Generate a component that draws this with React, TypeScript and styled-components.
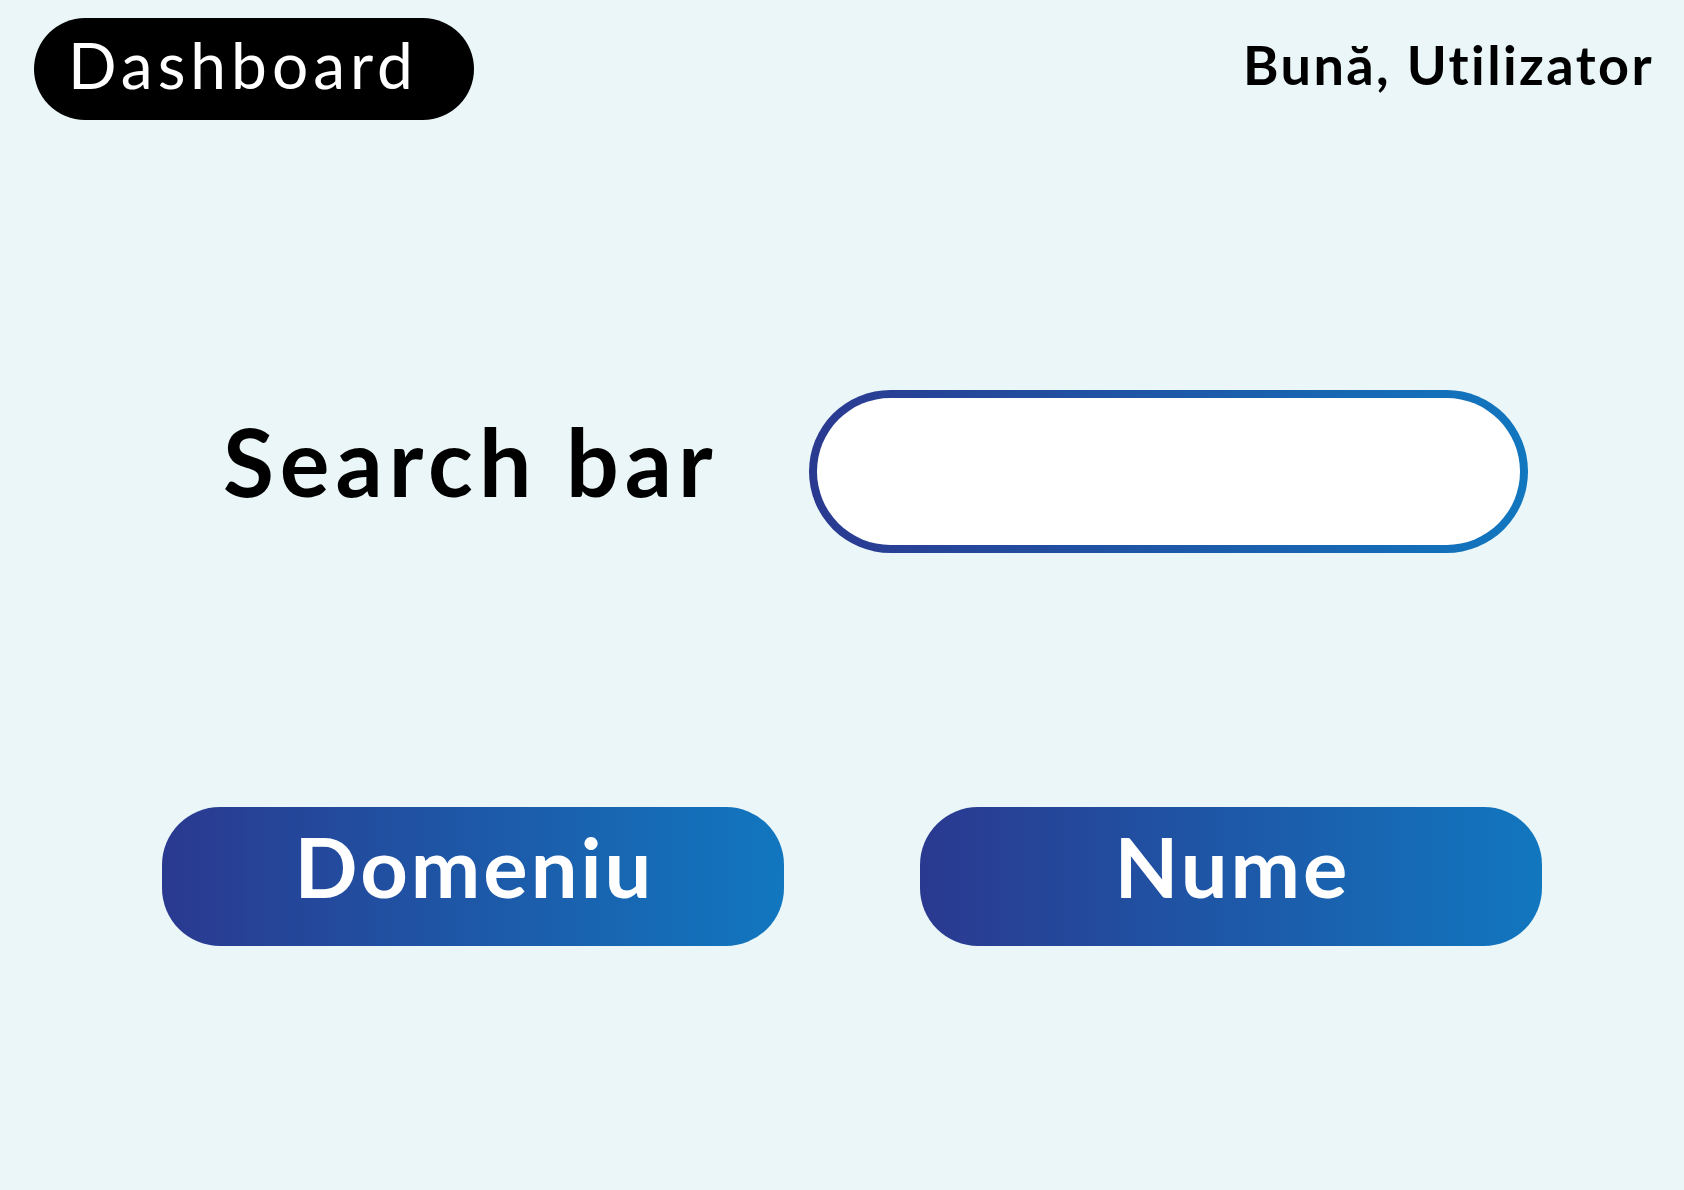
import React from 'react'
import styled, { createGlobalStyle } from 'styled-components'

const GlobalStyle = createGlobalStyle`
  html, body {
    margin: 0;
    padding: 0;
  }
  body {
    background-color: #EAF6F8;
    font-family: Lato, "Noto Sans", "Liberation Sans", sans-serif;
  }
`

const Page = styled.div`
  width: 1684px;
  height: 1190px;
  background-color: #EAF6F8;
  display: flex;
  flex-direction: column;
  box-sizing: border-box;
`

const Header = styled.div`
  display: flex;
  justify-content: space-between;
  align-items: center;
  padding: 18px 30px 0 34px;
`

const Brand = styled.div`
  width: 440px;
  height: 102px;
  box-sizing: border-box;
  padding: 0 0 10px 34px;
  display: flex;
  align-items: center;
  background-color: #000;
  border-radius: 51px;
  color: #fff;
  font-size: 64px;
  font-weight: 400;
  letter-spacing: 5px;
`

const Greeting = styled.div`
  color: #000;
  font-size: 54px;
  font-weight: 700;
  letter-spacing: 2.4px;
  margin-top: -10px;
`

const SearchRow = styled.div`
  display: flex;
  align-items: center;
  padding-left: 223px;
  margin-top: 270px;
  gap: 92px;
`

const SearchLabel = styled.label`
  color: #000;
  font-size: 93px;
  font-weight: 700;
  letter-spacing: 6px;
  white-space: nowrap;
  width: 494px;
  padding-bottom: 22px;
`

const SearchInput = styled.input`
  width: 719px;
  height: 163px;
  box-sizing: border-box;
  border: 8px solid transparent;
  border-radius: 82px;
  background:
    linear-gradient(#fff, #fff) padding-box,
    linear-gradient(90deg, #2a3990, #1177bf) border-box;
  outline: none;
  padding: 0 60px;
  font-size: 48px;
  font-family: inherit;
`

const ButtonRow = styled.div`
  display: flex;
  padding-left: 162px;
  margin-top: 254px;
  gap: 136px;
`

const FilterButton = styled.button`
  width: 622px;
  height: 139px;
  border: none;
  border-radius: 58px;
  background: linear-gradient(90deg, #2a3990, #1177bf);
  color: #fff;
  font-family: inherit;
  font-size: 83px;
  font-weight: 700;
  letter-spacing: 3px;
  cursor: pointer;
  padding: 0 0 22px 3px;
`

export default function App() {
  return (
    <Page>
      <GlobalStyle />
      <Header>
        <Brand>Dashboard</Brand>
        <Greeting>Bună, Utilizator</Greeting>
      </Header>
      <SearchRow>
        <SearchLabel htmlFor="search">Search bar</SearchLabel>
        <SearchInput id="search" type="text" />
      </SearchRow>
      <ButtonRow>
        <FilterButton>Domeniu</FilterButton>
        <FilterButton>Nume</FilterButton>
      </ButtonRow>
    </Page>
  )
}
